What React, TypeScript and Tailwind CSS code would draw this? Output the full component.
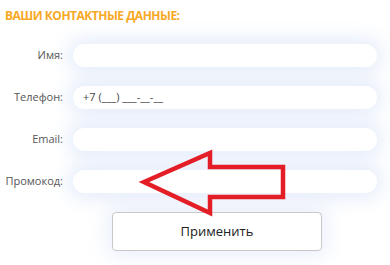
import React from 'react'

const fields = [
  { label: 'Имя:', value: '' },
  { label: 'Телефон:', value: '+7 (___) ___-__-__' },
  { label: 'Email:', value: '' },
  { label: 'Промокод:', value: '' },
]

function Arrow() {
  return (
    <svg
      className="pointer-events-none absolute left-0 top-0"
      width="390"
      height="265"
      viewBox="0 0 390 265"
    >
      <polygon
        points="144,182 210,153 210,167 283,167 283,197 210,197 210,213"
        fill="none"
        stroke="#e31e26"
        strokeWidth="4.5"
        strokeLinejoin="miter"
      />
    </svg>
  )
}

export default function App() {
  return (
    <div className="relative h-[265px] w-[390px] overflow-hidden bg-white font-['Open_Sans',sans-serif]">
      <div className="pl-[5px] pt-[8px] text-[12px] font-bold leading-[16px] tracking-[-0.5px] text-[#f7a925]">
        ВАШИ КОНТАКТНЫЕ ДАННЫЕ:
      </div>
      <div className="mt-[20px] flex flex-col gap-[19px]">
        {fields.map((f) => (
          <div key={f.label} className="flex items-center">
            <div className="w-[63px] text-right text-[11px] text-[#555]">{f.label}</div>
            <div className="ml-[10px] flex h-[23px] w-[304px] items-center rounded-full bg-white pl-[10px] text-[11px] text-[#444] shadow-[0_0_18px_6px_rgba(200,215,245,0.45)]">
              {f.value}
            </div>
          </div>
        ))}
      </div>
      <div className="mt-[19px] flex pl-[112px]">
        <button className="h-[39px] w-[210px] rounded-[4px] border border-[#c8c8c8] bg-white text-[13px] text-[#222] shadow-[0_0_18px_6px_rgba(200,215,245,0.35)]">
          Применить
        </button>
      </div>
      <Arrow />
    </div>
  )
}
